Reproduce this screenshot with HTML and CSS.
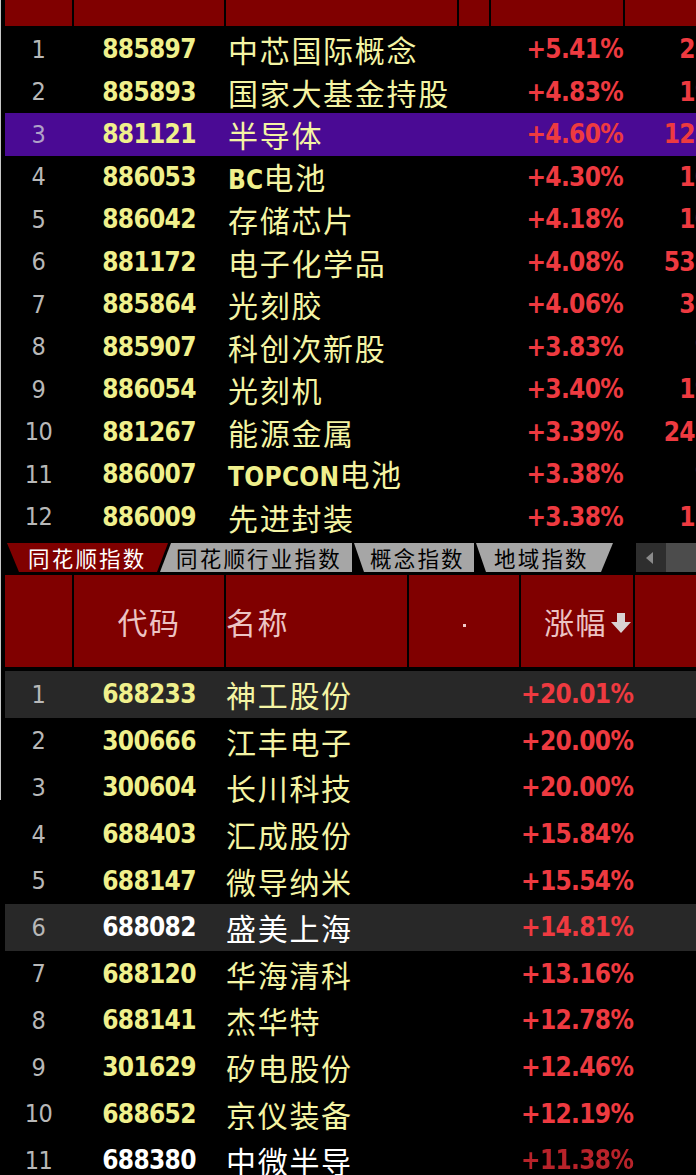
FILE: index.html
```html
<!DOCTYPE html>
<html lang="zh">
<head>
<meta charset="utf-8">
<title>同花顺指数</title>
<link rel="stylesheet" href="styles.css">
</head>
<body>
<div class="page">
  <section class="top">
    <div class="hdr hdr-top">
      <div class="hc"></div><div class="hc"></div><div class="hc"></div><div class="hc"></div><div class="hc"></div><div class="hc"></div>
    </div>
    <div class="row rt"><span class="num">1</span><span class="code">885897</span><span class="name">中芯国际概念</span><span></span><span class="pct">+5.41%</span><span class="pct extra">217</span></div>
    <div class="row rt"><span class="num">2</span><span class="code">885893</span><span class="name">国家大基金持股</span><span></span><span class="pct">+4.83%</span><span class="pct extra">195</span></div>
    <div class="row rt sel"><span class="num">3</span><span class="code">881121</span><span class="name">半导体</span><span></span><span class="pct">+4.60%</span><span class="pct extra">1226</span></div>
    <div class="row rt"><span class="num">4</span><span class="code">886053</span><span class="name"><span class="lt">BC</span>电池</span><span></span><span class="pct">+4.30%</span><span class="pct extra">108</span></div>
    <div class="row rt"><span class="num">5</span><span class="code">886042</span><span class="name">存储芯片</span><span></span><span class="pct">+4.18%</span><span class="pct extra">103</span></div>
    <div class="row rt"><span class="num">6</span><span class="code">881172</span><span class="name">电子化学品</span><span></span><span class="pct">+4.08%</span><span class="pct extra">5386</span></div>
    <div class="row rt"><span class="num">7</span><span class="code">885864</span><span class="name">光刻胶</span><span></span><span class="pct">+4.06%</span><span class="pct extra">387</span></div>
    <div class="row rt"><span class="num">8</span><span class="code">885907</span><span class="name">科创次新股</span><span></span><span class="pct">+3.83%</span><span class="pct extra">98</span></div>
    <div class="row rt"><span class="num">9</span><span class="code">886054</span><span class="name">光刻机</span><span></span><span class="pct">+3.40%</span><span class="pct extra">195</span></div>
    <div class="row rt"><span class="num">10</span><span class="code">881267</span><span class="name">能源金属</span><span></span><span class="pct">+3.39%</span><span class="pct extra">2453</span></div>
    <div class="row rt"><span class="num">11</span><span class="code">886007</span><span class="name"><span class="lt">TOPCON</span>电池</span><span></span><span class="pct">+3.38%</span><span class="pct extra">95</span></div>
    <div class="row rt"><span class="num">12</span><span class="code">886009</span><span class="name">先进封装</span><span></span><span class="pct">+3.38%</span><span class="pct extra">188</span></div>
  </section>

  <nav class="tabs">
    <div class="tab tab-active">同花顺指数</div>
    <div class="tab tab-2">同花顺行业指数</div>
    <div class="tab tab-3">概念指数</div>
    <div class="tab tab-4">地域指数</div>
    <div class="tab-space"></div>
    <div class="scroll-btn"><svg width="10" height="14" viewBox="0 0 10 14"><polygon points="8,1 8,13 1,7" fill="#8a8a8a"/></svg></div>
    <div class="scroll-track"></div>
  </nav>

  <section class="bottom">
    <div class="hdr hdr-bot">
      <div class="hc"></div>
      <div class="hc hc-center">代码</div>
      <div class="hc hc-left">名称</div>
      <div class="hc hc-center"><span class="dot"></span></div>
      <div class="hc hc-sort">涨幅<svg class="sort-arrow" width="24" height="24" viewBox="0 0 24 24"><path d="M8 2h8v9h6l-10 11L2 11h6z" fill="#d9d2d2"/></svg></div>
      <div class="hc"></div>
    </div>
    <div class="row rb hl"><span class="num">1</span><span class="code">688233</span><span class="name">神工股份</span><span></span><span class="pct">+20.01%</span><span></span></div>
    <div class="row rb"><span class="num">2</span><span class="code">300666</span><span class="name">江丰电子</span><span></span><span class="pct">+20.00%</span><span></span></div>
    <div class="row rb"><span class="num">3</span><span class="code">300604</span><span class="name">长川科技</span><span></span><span class="pct">+20.00%</span><span></span></div>
    <div class="row rb"><span class="num">4</span><span class="code">688403</span><span class="name">汇成股份</span><span></span><span class="pct">+15.84%</span><span></span></div>
    <div class="row rb"><span class="num">5</span><span class="code">688147</span><span class="name">微导纳米</span><span></span><span class="pct">+15.54%</span><span></span></div>
    <div class="row rb hl white"><span class="num">6</span><span class="code">688082</span><span class="name">盛美上海</span><span></span><span class="pct">+14.81%</span><span></span></div>
    <div class="row rb"><span class="num">7</span><span class="code">688120</span><span class="name">华海清科</span><span></span><span class="pct">+13.16%</span><span></span></div>
    <div class="row rb"><span class="num">8</span><span class="code">688141</span><span class="name">杰华特</span><span></span><span class="pct">+12.78%</span><span></span></div>
    <div class="row rb"><span class="num">9</span><span class="code">301629</span><span class="name">矽电股份</span><span></span><span class="pct">+12.46%</span><span></span></div>
    <div class="row rb"><span class="num">10</span><span class="code">688652</span><span class="name">京仪装备</span><span></span><span class="pct">+12.19%</span><span></span></div>
    <div class="row rb white"><span class="num">11</span><span class="code">688380</span><span class="name">中微半导</span><span></span><span class="pct smudge">+11.38%</span><span></span></div>
  </section>
</div>
</body>
</html>
```
FILE: styles.css
```css
html, body {
  margin: 0;
  padding: 0;
  width: 696px;
  height: 1175px;
  overflow: hidden;
  background: #000;
}
body {
  background-image: linear-gradient(#c8c8c8, #c8c8c8);
  background-size: 1px 800px;
  background-repeat: no-repeat;
  font-family: "Noto Sans CJK SC", sans-serif;
}
.page {
  padding-left: 5px;
  width: 760px;
}

/* grids */
.top .hdr, .rt {
  display: grid;
  grid-template-columns: 67px 150px 231px 30px 132px 120px;
  column-gap: 2px;
}
.bottom .hdr, .rb {
  display: grid;
  grid-template-columns: 67px 150px 181px 110px 112px 80px;
  column-gap: 2px;
}

.hdr {
  background: #000;
}
.hc {
  background: #800000;
}
.hdr-top {
  height: 26px;
  margin-bottom: 2px;
}
.hdr-bot {
  height: 92px;
  margin-top: 3px;
  margin-bottom: 4px;
}
.hdr-bot .hc {
  display: flex;
  align-items: center;
  color: #ecc4c4;
  font-size: 30px;
  letter-spacing: 1.5px;
}
.hc-center { justify-content: center; }
.hc-left { justify-content: flex-start; }
.hc-sort {
  justify-content: flex-end;
}
.sort-arrow {
  margin-left: 2px;
  margin-top: 4px;
}
.dot {
  width: 3px;
  height: 3px;
  background: #f0c8c8;
  margin-top: 8px;
}

/* rows */
.row {
  align-items: center;
  white-space: nowrap;
}
.rt { height: 42.5px; }
.rb { height: 46.6px; }
.sel { background: #4a0a94; }
.hl { background: #282828; }

.num {
  text-align: center;
  color: #b8b8b8;
  font-family: "DejaVu Sans Condensed", "DejaVu Sans", sans-serif;
  font-stretch: condensed;
  font-size: 25px;
  letter-spacing: -0.5px;
}
.sel .num { color: #b0a2c8; }
.code, .pct, .lt {
  font-family: "DejaVu Sans Condensed", "DejaVu Sans", sans-serif;
  font-stretch: condensed;
  font-weight: bold;
  font-size: 26px;
  letter-spacing: -0.7px;
}
.code {
  text-align: center;
  color: #f0f08c;
}
.name {
  font-family: "Noto Sans CJK SC", sans-serif;
  font-size: 30px;
  letter-spacing: 1.7px;
  color: #f4f4a4;
  line-height: 1;
}
.rt .name { padding-left: 2px; }
.lt {
  color: #f0f08c;
  letter-spacing: 0.3px;
}
.pct {
  text-align: right;
  color: #ee3a40;
}
.extra {
  padding-right: 19px;
}
.white .code, .white .name { color: #ffffff; }
.smudge {
  color: #b8232a;
  filter: blur(0.6px);
}

/* tabs */
.tabs {
  display: flex;
  height: 29px;
  margin-top: 5px;
  padding-left: 2px;
  font-size: 21.5px;
  letter-spacing: 2.2px;
}
.tab {
  display: flex;
  align-items: center;
  background: #a6a6a6;
  color: #000;
  line-height: 1;
  box-sizing: border-box;
  flex: none;
}
.tab-active {
  width: 161px;
  background: #800000;
  color: #fff;
  padding-left: 21px;
  clip-path: polygon(0 0, 100% 0, calc(100% - 11px) 100%, 12px 100%);
  position: relative;
  z-index: 1;
}
.tab-2 {
  width: 192px;
  margin-left: -8px;
  padding-left: 16px;
  clip-path: polygon(11px 0, 100% 0, 100% 100%, 0 100%);
}
.tab-3 {
  width: 120px;
  margin-left: 2px;
  padding-left: 16px;
  clip-path: polygon(0 0, 100% 0, 100% 100%, 10px 100%);
}
.tab-4 {
  width: 137px;
  margin-left: 2px;
  padding-left: 18px;
  clip-path: polygon(0 0, 100% 0, calc(100% - 12px) 100%, 10px 100%);
}
.tab-space {
  width: 23px;
  flex: none;
}
.scroll-btn {
  width: 30px;
  flex: none;
  background: #2e2e2e;
  display: flex;
  align-items: center;
  padding-left: 9px;
  box-sizing: border-box;
}
.scroll-track {
  width: 40px;
  flex: none;
  background: #4c4c4c;
}
```
